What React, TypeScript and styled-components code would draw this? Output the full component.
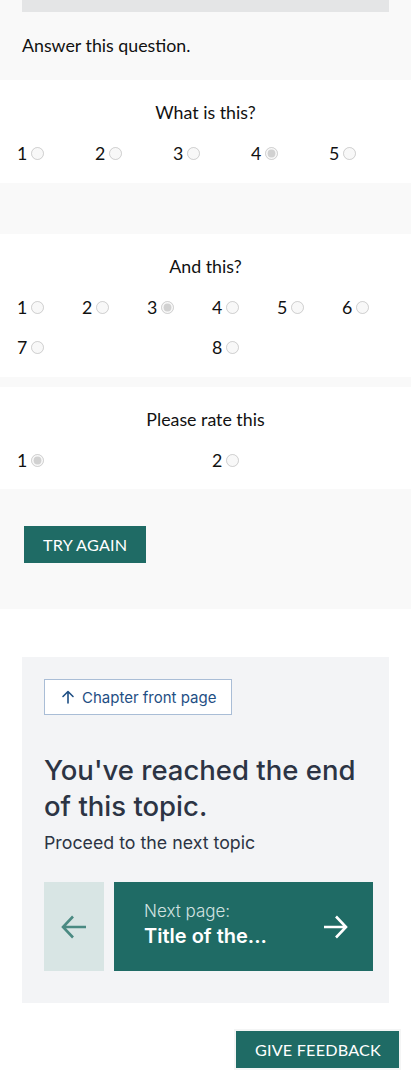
import React from "react";
import styled, { createGlobalStyle } from "styled-components";

const Global = createGlobalStyle`
  html, body { margin: 0; padding: 0; background: #ffffff; }
  body { font-family: Lato, "Liberation Sans", sans-serif; color: #111; }
  * { box-sizing: border-box; }
`;

const Panel = styled.div`
  background: #f9f9f9;
  display: flex;
  flex-direction: column;
`;

const Intro = styled.div`
  padding: 0 22px;
  height: 80px;
`;

const ProgressBar = styled.div`
  height: 12px;
  background: #e4e5e6;
`;

const Instruction = styled.p`
  margin: 0;
  padding-top: 21px;
  font-size: 17.8px;
  line-height: 24px;
  color: #111;
`;

const QuestionCard = styled.div<{ $gap: number; $bottom: number }>`
  background: #ffffff;
  margin-top: ${(p) => p.$gap}px;
  padding: 20px 4px ${(p) => p.$bottom}px 17px;
`;

const QuestionTitle = styled.div`
  text-align: center;
  font-size: 17.8px;
  line-height: 24px;
  margin-bottom: 9px;
  padding-right: 13px;
  color: #111;
`;

const Options = styled.div<{ $cols: number }>`
  display: grid;
  grid-template-columns: repeat(${(p) => p.$cols}, 1fr);
  grid-auto-rows: 40px;
  width: 390px;
`;

const Option = styled.label`
  display: flex;
  align-items: center;
  font-size: 17.8px;
  color: #111;
`;

const Radio = styled.input`
  width: 13px;
  height: 13px;
  margin: 0 0 0 4px;
`;

const ActionArea = styled.div`
  padding: 37px 24px 46px;
`;

const PrimaryButton = styled.button`
  background: #1f6b65;
  color: #ffffff;
  border: none;
  font-family: Lato, "Liberation Sans", sans-serif;
  font-size: 16.2px;
  text-transform: uppercase;
  height: 37px;
  padding: 0 19px;
  letter-spacing: 0.2px;
  cursor: pointer;
`;

const EndCard = styled.div`
  margin: 48px 22px 0;
  background: #f3f4f6;
  padding: 22px 16px 32px 22px;
  font-family: Inter, "Noto Sans", sans-serif;
`;

const ChapterLink = styled.a`
  display: inline-flex;
  align-items: center;
  gap: 7px;
  height: 36px;
  padding: 0 15px 0 16px;
  background: #ffffff;
  border: 1px solid #a9bdd6;
  color: #1f4f84;
  font-size: 15px;
  text-decoration: none;
`;

const EndHeading = styled.h2`
  margin: 37px 0 0;
  font-size: 27.5px;
  line-height: 36px;
  font-weight: 500;
  color: #2c3444;
`;

const EndSub = styled.p`
  margin: 7px 0 0;
  font-size: 17.8px;
  line-height: 24px;
  color: #2c3444;
`;

const Nav = styled.div`
  display: flex;
  gap: 10px;
  margin-top: 27px;
  height: 89px;
`;

const PrevButton = styled.button`
  width: 60px;
  background: #d8e5e4;
  border: none;
  display: flex;
  align-items: center;
  justify-content: center;
  padding: 0;
`;

const NextButton = styled.button`
  flex: 1;
  background: #1f6b65;
  border: none;
  display: flex;
  align-items: center;
  justify-content: space-between;
  padding: 0 24px 0 30px;
  color: #ffffff;
  text-align: left;
  font-family: Inter, "Noto Sans", sans-serif;
`;

const NextText = styled.div`
  display: flex;
  flex-direction: column;
  margin-top: -3px;
`;

const NextLabel = styled.span`
  font-size: 17px;
  line-height: 22px;
  font-weight: 300;
  color: #d2e2e0;
`;

const NextTitle = styled.span`
  font-size: 20px;
  line-height: 28px;
  font-weight: 600;
  color: #ffffff;
`;

const Footer = styled.div`
  display: flex;
  justify-content: flex-end;
  padding: 26px 10px 10px;
`;

const FeedbackButton = styled(PrimaryButton)`
  height: 41px;
  padding: 0 18px 0 19px;
  border: 2px solid #f4f5f5;
`;

type Q = { title: string; cols: number; options: string[]; checked: string; gap: number; bottom: number };

const questions: Q[] = [
  { title: "What is this?", cols: 5, options: ["1", "2", "3", "4", "5"], checked: "4", gap: 0, bottom: 10 },
  { title: "And this?", cols: 6, options: ["1", "2", "3", "4", "5", "6", "7", "", "", "8"], checked: "3", gap: 51, bottom: 10 },
  { title: "Please rate this", cols: 2, options: ["1", "2"], checked: "1", gap: 10, bottom: 9 },
];

function Question({ q, idx }: { q: Q; idx: number }) {
  return (
    <QuestionCard $gap={q.gap} $bottom={q.bottom}>
      <QuestionTitle>{q.title}</QuestionTitle>
      <Options $cols={q.cols}>
        {q.options.map((o, i) =>
          o === "" ? (
            <span key={i} />
          ) : (
            <Option key={i}>
              {o}
              <Radio type="radio" name={`q${idx}`} disabled defaultChecked={o === q.checked} />
            </Option>
          )
        )}
      </Options>
    </QuestionCard>
  );
}

export default function App() {
  return (
    <>
      <Global />
      <Panel>
        <Intro>
          <ProgressBar />
          <Instruction>Answer this question.</Instruction>
        </Intro>
        {questions.map((q, i) => (
          <Question key={i} q={q} idx={i} />
        ))}
        <ActionArea>
          <PrimaryButton>Try again</PrimaryButton>
        </ActionArea>
      </Panel>
      <EndCard>
        <ChapterLink href="#">
          <svg width="14" height="14" viewBox="0 0 14 14" fill="none" stroke="#1f4f84" strokeWidth="1.6" strokeLinecap="round" strokeLinejoin="round">
            <path d="M7 13V1.5M2 6.5l5-5 5 5" />
          </svg>
          Chapter front page
        </ChapterLink>
        <EndHeading>You've reached the end of this topic.</EndHeading>
        <EndSub>Proceed to the next topic</EndSub>
        <Nav>
          <PrevButton aria-label="Previous page">
            <svg width="28" height="26" viewBox="0 0 28 26" fill="none" stroke="#4a8a82" strokeWidth="2.6" strokeLinejoin="miter">
              <path d="M26 13H3M13 2.5L3 13l10 10.5" />
            </svg>
          </PrevButton>
          <NextButton>
            <NextText>
              <NextLabel>Next page:</NextLabel>
              <NextTitle>Title of the...</NextTitle>
            </NextText>
            <svg width="26" height="26" viewBox="0 0 26 26" fill="none" stroke="#ffffff" strokeWidth="2.6">
              <path d="M1 13h22M13 2.5L23 13 13 23.5" />
            </svg>
          </NextButton>
        </Nav>
      </EndCard>
      <Footer>
        <FeedbackButton>Give feedback</FeedbackButton>
      </Footer>
    </>
  );
}
